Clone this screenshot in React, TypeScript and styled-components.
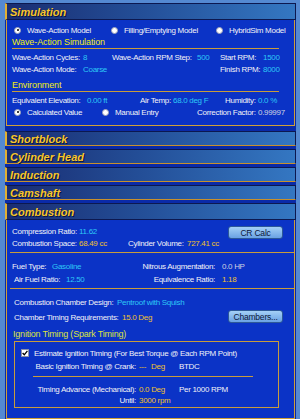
import React from "react";
import styled, { createGlobalStyle } from "styled-components";

const GlobalStyle = createGlobalStyle`
  html, body {
    margin: 0;
    padding: 0;
    background: #5489d2;
  }
  body {
    width: 300px;
    height: 419px;
    overflow: hidden;
    font-family: "Liberation Sans", Arial, sans-serif;
  }
`;

const Frame = styled.div`
  margin: 3px 4px 0 5px;
  height: 416px;
  background: #0a2aa8;
  display: flex;
  flex-direction: column;
  overflow: hidden;
`;

const Bar = styled.div<{ $tall?: boolean; $mt?: number }>`
  flex: none;
  box-sizing: border-box;
  height: ${(p) => (p.$tall ? 17 : 15)}px;
  margin-top: ${(p) => p.$mt ?? 0}px;
  padding-left: 3px;
  display: flex;
  align-items: center;
  background: linear-gradient(90deg, #1a2d72 0%, #234d96 45%, #3477c2 100%);
  border-top: 1px solid #0c1850;
  border-right: 1px solid #0c1850;
  border-left: 2px solid #e2b032;
  border-bottom: 1px solid ${(p) => (p.$tall ? "#0c1850" : "#c8902c")};
  font: italic 700 11px "Liberation Sans", Arial, sans-serif;
  color: #f8c62a;
  text-shadow: 1px 1px 0 #0a1440;
  white-space: nowrap;
`;

const Body = styled.div<{ $grow?: boolean }>`
  flex: ${(p) => (p.$grow ? "1 0 auto" : "none")};
  box-sizing: border-box;
  margin: 0 1px;
  background: #0b33c6;
  border: 1px solid #d0a038;
  border-top: none;
  padding: 4px 0 7px 5px;
  font-size: 8px;
  letter-spacing: -0.3px;
  color: #f2f2f6;
  white-space: nowrap;
`;

const Row = styled.div<{ $mt?: number; $ml?: number; $h?: number }>`
  display: flex;
  align-items: center;
  height: ${(p) => p.$h ?? 12}px;
  margin-top: ${(p) => p.$mt ?? 0}px;
  margin-left: ${(p) => p.$ml ?? 0}px;
`;

const Cell = styled.div<{ $w?: number }>`
  display: flex;
  align-items: center;
  flex: none;
  width: ${(p) => (p.$w ? `${p.$w}px` : "auto")};
`;

const Label = styled.span<{ $w?: number; $right?: boolean }>`
  display: inline-block;
  flex: none;
  width: ${(p) => (p.$w ? `${p.$w}px` : "auto")};
  text-align: ${(p) => (p.$right ? "right" : "left")};
`;

const Value = styled.span<{ $c: string }>`
  color: ${(p) => p.$c};
`;

const Heading = styled.div<{ $mt?: number }>`
  width: 267px;
  height: 11px;
  line-height: 11px;
  margin-top: ${(p) => p.$mt ?? 0}px;
  border-bottom: 1px solid #c89c3c;
  font-size: 9px;
  letter-spacing: -0.1px;
  color: #f2ee10;
`;

const Divider = styled.div<{ $mt: number; $ml?: number; $w?: number }>`
  height: 1px;
  margin-top: ${(p) => p.$mt}px;
  margin-left: ${(p) => p.$ml ?? -2}px;
  width: ${(p) => p.$w ?? 284}px;
  background: #c89c3c;
`;

const RadioDot = styled.span<{ $on?: boolean }>`
  position: relative;
  flex: none;
  width: 7px;
  height: 7px;
  box-sizing: border-box;
  border-radius: 50%;
  background: #ffffff;
  border: 1px solid #9aa0b8;
  margin-right: 6px;
  &::after {
    content: "";
    display: ${(p) => (p.$on ? "block" : "none")};
    position: absolute;
    left: 1.5px;
    top: 1.5px;
    width: 2px;
    height: 2px;
    border-radius: 50%;
    background: #000000;
  }
`;

const Box = styled.span`
  flex: none;
  width: 8px;
  height: 8px;
  box-sizing: border-box;
  background: #ffffff;
  border: 1px solid #8a90a8;
  margin-right: 5px;
  display: flex;
  align-items: center;
  justify-content: center;
`;

const Btn = styled.button<{ $mt?: number }>`
  flex: none;
  width: 55px;
  height: 13px;
  margin-top: ${(p) => p.$mt ?? 0}px;
  padding: 0;
  border: 1px solid #2c5898;
  border-radius: 3px;
  background: linear-gradient(#a4d0f6, #6aa2e4);
  font: 8.5px "Liberation Sans", Arial, sans-serif;
  letter-spacing: -0.2px;
  color: #0c1838;
`;

const IgnTitle = styled.div`
  height: 12px;
  line-height: 12px;
  margin-top: 5px;
  margin-left: 1px;
  font-size: 9px;
  letter-spacing: -0.2px;
  color: #dce43c;
`;

const IgnBox = styled.div`
  box-sizing: border-box;
  width: 265px;
  margin: 1px 0 0 2px;
  border: 1px solid #c89c3c;
  padding: 5px 0 1px 6px;
`;

const Radio = ({ on, w, children }: { on?: boolean; w?: number; children: React.ReactNode }) => (
  <Cell $w={w}>
    <RadioDot $on={on} />
    <span>{children}</span>
  </Cell>
);

const cyan = "#2ec8f6";
const gold = "#f0c22c";
const gray = "#cfd2e2";

export default function App() {
  return (
    <>
      <GlobalStyle />
      <Frame>
        <Bar $tall>Simulation</Bar>
        <Body>
          <Row $ml={2}>
            <Radio on w={97}>Wave-Action Model</Radio>
            <Radio w={105}>Filling/Emptying Model</Radio>
            <Radio>HybridSim Model</Radio>
          </Row>
          <Heading $mt={1}>Wave-Action Simulation</Heading>
          <Row $mt={2}>
            <Cell $w={100}>
              <Label $w={71}>Wave-Action Cycles:</Label>
              <Value $c={cyan}>8</Value>
            </Cell>
            <Cell $w={108}>
              <Label $w={85}>Wave-Action RPM Step:</Label>
              <Value $c={cyan}>500</Value>
            </Cell>
            <Cell>
              <Label $w={43}>Start RPM:</Label>
              <Value $c={cyan}>1500</Value>
            </Cell>
          </Row>
          <Row>
            <Cell $w={100}>
              <Label $w={71}>Wave-Action Mode:</Label>
              <Value $c={cyan}>Coarse</Value>
            </Cell>
            <Cell $w={108} />
            <Cell>
              <Label $w={43}>Finish RPM:</Label>
              <Value $c={cyan}>8000</Value>
            </Cell>
          </Row>
          <Heading $mt={5}>Environment</Heading>
          <Row $mt={2}>
            <Cell $w={128}>
              <Label $w={75}>Equivalent Elevation:</Label>
              <Value $c={cyan}>0.00 ft</Value>
            </Cell>
            <Cell $w={85}>
              <Label $w={33}>Air Temp:</Label>
              <Value $c={cyan}>68.0 deg F</Value>
            </Cell>
            <Cell>
              <Label $w={33}>Humidity:</Label>
              <Value $c={cyan}>0.0 %</Value>
            </Cell>
          </Row>
          <Row $ml={2}>
            <Radio on w={88}>Calculated Value</Radio>
            <Radio w={95}>Manual Entry</Radio>
            <Cell>
              <Label $w={61}>Correction Factor:</Label>
              <Value $c={gray}>0.99997</Value>
            </Cell>
          </Row>
        </Body>

        <Bar $mt={5}>Shortblock</Bar>
        <Bar $mt={3}>Cylinder Head</Bar>
        <Bar $mt={3}>Induction</Bar>
        <Bar $mt={3}>Camshaft</Bar>

        <Bar $tall $mt={3}>Combustion</Bar>
        <Body $grow>
          <Row $mt={1}>
            <Cell $w={216}>
              <Label $w={67}>Compression Ratio:</Label>
              <Value $c={cyan}>11.62</Value>
            </Cell>
            <Btn $mt={3}>CR Calc</Btn>
          </Row>
          <Row>
            <Cell $w={116}>
              <Label $w={67}>Combustion Space:</Label>
              <Value $c={gold}>68.49 cc</Value>
            </Cell>
            <Cell>
              <Label $w={59}>Cylinder Volume:</Label>
              <Value $c={gold}>727.41 cc</Value>
            </Cell>
          </Row>
          <Divider $mt={3} />
          <Row $mt={7}>
            <Cell $w={128}>
              <Label $w={40}>Fuel Type:</Label>
              <Value $c={cyan}>Gasoline</Value>
            </Cell>
            <Label $w={75} $right>
              Nitrous Augmentation:
            </Label>
            <Value $c={gray} style={{ marginLeft: 7 }}>
              0.0 HP
            </Value>
          </Row>
          <Row $mt={1}>
            <Cell $w={128}>
              <Label $w={52} style={{ paddingLeft: 2 }}>
                Air Fuel Ratio:
              </Label>
              <Value $c={cyan}>12.50</Value>
            </Cell>
            <Label $w={75} $right>
              Equivalence Ratio:
            </Label>
            <Value $c={gold} style={{ marginLeft: 7 }}>
              1.18
            </Value>
          </Row>
          <Divider $mt={3} />
          <Row $mt={7} $ml={2}>
            <Label $w={103}>Combustion Chamber Design:</Label>
            <Value $c={cyan}>Pentroof with Squish</Value>
          </Row>
          <Row $mt={3} $ml={2}>
            <Cell $w={214}>
              <Label $w={108}>Chamber Timing Requirements:</Label>
              <Value $c={gold}>15.0 Deg</Value>
            </Cell>
            <Btn $mt={-1}>Chambers...</Btn>
          </Row>
          <IgnTitle>Ignition Timing (Spark Timing)</IgnTitle>
          <IgnBox>
            <Row>
              <Box>
                <svg width="6" height="6" viewBox="0 0 6 6">
                  <path d="M0.6 3 L2.3 4.8 L5.4 0.9" fill="none" stroke="#000" strokeWidth="1.3" />
                </svg>
              </Box>
              <span>Estimate Ignition Timing (For Best Torque @ Each RPM Point)</span>
            </Row>
            <Row $mt={1}>
              <Label $w={115} $right>
                Basic Ignition Timing @ Crank:
              </Label>
              <Label $w={40} style={{ marginLeft: 3 }}>
                <Value $c={gold}>---</Value>
                <Value $c={gold} style={{ marginLeft: 5 }}>
                  Deg
                </Value>
              </Label>
              <span>BTDC</span>
            </Row>
            <Divider $mt={4} $ml={12} $w={220} />
            <Row $mt={7} $h={11}>
              <Label $w={115} $right>
                Timing Advance (Mechanical):
              </Label>
              <Label $w={40} style={{ marginLeft: 3 }}>
                <Value $c={gold}>0.0 Deg</Value>
              </Label>
              <span>Per 1000 RPM</span>
            </Row>
            <Row $h={11}>
              <Label $w={115} $right>
                Until:
              </Label>
              <Label $w={40} style={{ marginLeft: 3 }}>
                <Value $c={gold}>3000 rpm</Value>
              </Label>
            </Row>
          </IgnBox>
        </Body>
      </Frame>
    </>
  );
}
